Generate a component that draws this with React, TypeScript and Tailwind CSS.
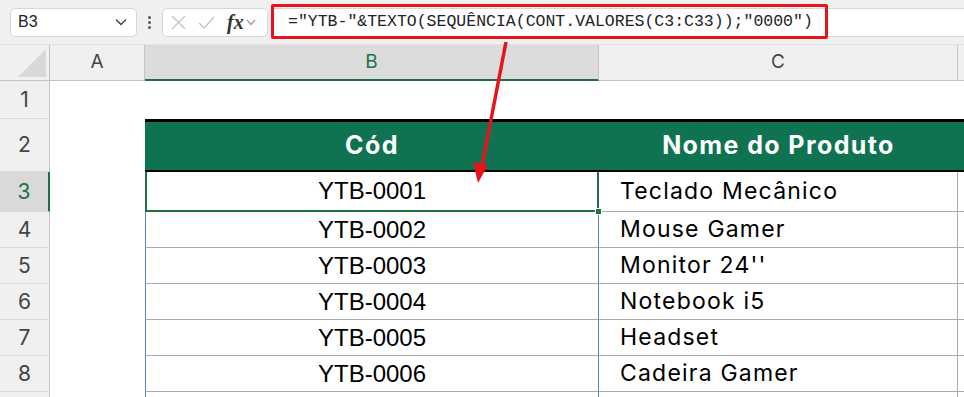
import React from "react";

const rows = [
  { n: 4, cod: "YTB-0002", nome: "Mouse Gamer" },
  { n: 5, cod: "YTB-0003", nome: "Monitor 24''" },
  { n: 6, cod: "YTB-0004", nome: "Notebook i5" },
  { n: 7, cod: "YTB-0005", nome: "Headset" },
  { n: 8, cod: "YTB-0006", nome: "Cadeira Gamer" },
];

const aptos = { fontFamily: "Inter, 'Noto Sans', sans-serif" };

const RowHead = ({ n, h, active }: { n?: number; h: string; active?: boolean }) => (
  <div
    className={`${h} w-[50px] shrink-0 flex items-center justify-center text-[21px] border-b border-[#d9d9d9] ${
      active
        ? "bg-[#d9d9d9] text-[#1e7145] border-r-2 border-r-[#1e7145]"
        : "bg-[#f0f0f0] text-[#444] border-r border-r-[#c4c4c4]"
    }`}
    style={aptos}
  >
    {n}
  </div>
);

const Toolbar = () => (
  <div className="h-[44px] bg-[#f0f0f0] flex items-center relative">
    <div className="ml-[10px] w-[127px] h-[29px] bg-white border border-[#d6d6d6] rounded-[5px] flex items-center justify-between pl-[7px] pr-[9px]">
      <span className="text-[16px] text-[#222]" style={{ fontFamily: "'Liberation Sans', Arial, sans-serif" }}>
        B3
      </span>
      <svg width="12" height="8" viewBox="0 0 12 8">
        <path d="M1 1.5 L6 6.5 L11 1.5" fill="none" stroke="#444" strokeWidth="1.4" />
      </svg>
    </div>
    <div className="w-[25px] flex flex-col items-center gap-[2px]">
      <span className="w-[3px] h-[3px] rounded-full bg-[#555]" />
      <span className="w-[3px] h-[3px] rounded-full bg-[#555]" />
      <span className="w-[3px] h-[3px] rounded-full bg-[#555]" />
    </div>
    <div className="w-[106px] h-[29px] bg-white border border-[#d6d6d6] rounded-[5px] flex items-center pl-[8px] gap-[12px]">
      <svg width="15" height="15" viewBox="0 0 15 15">
        <path d="M1 1 L14 14 M14 1 L1 14" stroke="#c4c4c4" strokeWidth="1.4" />
      </svg>
      <svg width="17" height="13" viewBox="0 0 17 13">
        <path d="M1 7 L6 12 L16 1" fill="none" stroke="#c4c4c4" strokeWidth="1.4" />
      </svg>
      <div className="flex items-center gap-[2px]">
        <span className="italic font-bold text-[20px] text-[#333] leading-none" style={{ fontFamily: "'Liberation Serif', 'Times New Roman', serif" }}>
          fx
        </span>
        <svg width="10" height="7" viewBox="0 0 10 7">
          <path d="M1 1 L5 5.5 L9 1" fill="none" stroke="#999" strokeWidth="1.2" />
        </svg>
      </div>
    </div>
    <div className="ml-[5px] flex-1 h-[29px] bg-white border-y border-l border-[#d6d6d6] flex items-center pl-[14px]">
      <span className="text-[16.5px] text-[#222] whitespace-pre" style={{ fontFamily: "'Liberation Mono', 'DejaVu Sans Mono', monospace" }}>
        ="YTB-"&amp;TEXTO(SEQUÊNCIA(CONT.VALORES(C3:C33));"0000")
      </span>
    </div>
    <div className="absolute left-[271px] top-[4px] w-[557px] h-[35px] border-[3px] border-[#e8141b] rounded-[2px]" />
  </div>
);

const App = () => {
  return (
    <div className="w-[964px] h-[397px] overflow-hidden bg-white relative">
      <Toolbar />

      {/* column headers */}
      <div className="flex h-[37px] border-t border-[#e2e2e2]" style={aptos}>
        <div className="w-[50px] shrink-0 bg-[#f0f0f0] border-r border-b border-[#c4c4c4] relative">
          <svg className="absolute right-[3px] bottom-[3px]" width="28" height="28" viewBox="0 0 28 28">
            <path d="M28 0 L28 28 L0 28 Z" fill="#d8d8d8" />
          </svg>
        </div>
        <div className="w-[95px] shrink-0 bg-[#f0f0f0] border-r border-b border-[#c4c4c4] flex items-center justify-center text-[19px] text-[#444]">
          A
        </div>
        <div className="w-[454px] shrink-0 bg-[#dcdcdc] border-r border-[#c4c4c4] border-b-2 border-b-[#1e7145] flex items-center justify-center text-[19px] text-[#1e7145]">
          B
        </div>
        <div className="w-[359px] shrink-0 bg-[#f0f0f0] border-r border-b border-[#c4c4c4] flex items-center justify-center text-[19px] text-[#444]">
          C
        </div>
        <div className="flex-1 bg-[#f0f0f0] border-b border-[#c4c4c4]" />
      </div>

      {/* row 1 */}
      <div className="flex">
        <RowHead n={1} h="h-[38px]" />
        <div className="flex-1" />
      </div>

      {/* row 2: table header */}
      <div className="flex">
        <RowHead n={2} h="h-[53px]" />
        <div className="w-[95px] shrink-0" />
        <div className="flex-1 flex h-[53px] bg-[#0f7351] border-t-[3px] border-b-2 border-black text-white font-bold text-[25px] tracking-[1.4px]" style={aptos}>
          <div className="w-[454px] shrink-0 flex items-center justify-center">Cód</div>
          <div className="w-[359px] shrink-0 flex items-center justify-center">Nome do Produto</div>
          <div className="flex-1" />
        </div>
      </div>

      {/* row 3: selected */}
      <div className="flex">
        <RowHead n={3} h="h-[40px]" active />
        <div className="w-[95px] shrink-0" />
        <div
          className="w-[454px] shrink-0 h-[40px] border-2 border-t-0 border-[#1e7145] flex items-center justify-center text-[24px] text-black relative"
          style={{ fontFamily: "'Liberation Sans', Arial, sans-serif" }}
        >
          YTB-0001
          <span className="absolute -right-[5px] -bottom-[5px] w-[7px] h-[7px] bg-[#1e7145] border border-white" />
        </div>
        <div className="w-[359px] shrink-0 h-[40px] border-r border-b border-[#ababab] flex items-center pl-[21px] text-[23px] tracking-[1.2px] text-black" style={aptos}>
          Teclado Mecânico
        </div>
        <div className="flex-1 border-b border-[#ababab]" />
      </div>

      {rows.map((r) => (
        <div key={r.n} className="flex">
          <RowHead n={r.n} h="h-[36px]" />
          <div className="w-[95px] shrink-0" />
          <div
            className="w-[454px] shrink-0 h-[36px] border-x border-x-[#5a7fc3] border-b border-b-[#ababab] flex items-center justify-center text-[24px] text-black"
            style={{ fontFamily: "'Liberation Sans', Arial, sans-serif" }}
          >
            {r.cod}
          </div>
          <div className="w-[359px] shrink-0 h-[36px] border-r border-b border-[#ababab] flex items-center pl-[21px] text-[23px] tracking-[1.2px] text-black" style={aptos}>
            {r.nome}
          </div>
          <div className="flex-1 border-b border-[#ababab]" />
        </div>
      ))}

      <div className="flex">
        <RowHead h="h-[36px]" />
        <div className="w-[95px] shrink-0" />
        <div className="w-[454px] shrink-0 h-[36px] border-x border-[#5a7fc3]" />
        <div className="w-[359px] shrink-0 h-[36px] border-r border-[#ababab]" />
      </div>

      {/* annotation arrow */}
      <svg className="absolute left-0 top-0 pointer-events-none" width="964" height="397">
        <line x1="506" y1="42" x2="482" y2="166" stroke="#e8141b" strokeWidth="3.5" />
        <path d="M478 183 L473 162 L488 165 Z" fill="#e8141b" />
      </svg>
    </div>
  );
};

export default App;
